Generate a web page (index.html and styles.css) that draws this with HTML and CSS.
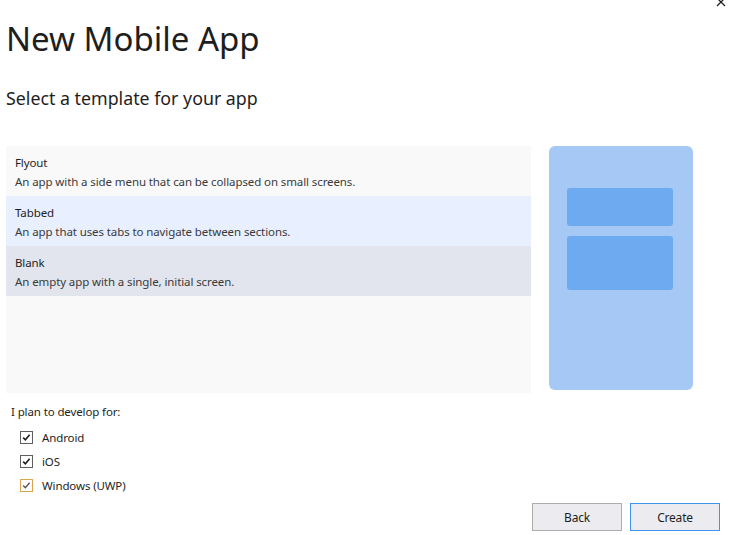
FILE: index.html
```html
<!DOCTYPE html>
<html>
<head>
<meta charset="utf-8">
<link rel="stylesheet" href="styles.css">
</head>
<body>
<div class="dialog">
  <svg class="close" viewBox="0 0 10 10" width="10" height="10"><path d="M1 -2 L9 6 M9 -2 L1 6" stroke="#1e1e1e" stroke-width="1.3" fill="none"/></svg>
  <h1 class="title">New Mobile App</h1>
  <h2 class="subtitle">Select a template for your app</h2>
  <div class="main">
    <div class="list">
      <div class="item">
        <div class="item-name">Flyout</div>
        <div class="item-desc">An app with a side menu that can be collapsed on small screens.</div>
      </div>
      <div class="item hover">
        <div class="item-name">Tabbed</div>
        <div class="item-desc">An app that uses tabs to navigate between sections.</div>
      </div>
      <div class="item selected">
        <div class="item-name">Blank</div>
        <div class="item-desc">An empty app with a single, initial screen.</div>
      </div>
    </div>
    <div class="preview">
      <div class="block small"></div>
      <div class="block large"></div>
    </div>
  </div>
  <div class="platforms">
    <div class="plat-label">I plan to develop for:</div>
    <label class="check"><span class="box"><svg viewBox="0 0 13 13" width="13" height="13"><path d="M3.2 6.6 L5.4 8.8 L9.6 3.8" fill="none" stroke="#1e1e1e" stroke-width="1.6"/></svg></span>Android</label>
    <label class="check"><span class="box"><svg viewBox="0 0 13 13" width="13" height="13"><path d="M3.2 6.6 L5.4 8.8 L9.6 3.8" fill="none" stroke="#1e1e1e" stroke-width="1.6"/></svg></span>iOS</label>
    <label class="check"><span class="box focus"><svg viewBox="0 0 13 13" width="13" height="13"><path d="M3.2 6.6 L5.4 8.8 L9.6 3.8" fill="none" stroke="#555" stroke-width="1.4"/></svg></span>Windows (UWP)</label>
  </div>
  <div class="buttons">
    <button class="btn">Back</button>
    <button class="btn primary">Create</button>
  </div>
</div>
</body>
</html>
```
FILE: styles.css
```css
html, body {
  margin: 0;
  padding: 0;
  background: #ffffff;
}
body {
  font-family: "Noto Sans", "Open Sans", sans-serif;
  color: #1e1e1e;
  width: 729px;
  height: 535px;
  overflow: hidden;
}
.dialog {
  position: relative;
  width: 729px;
  height: 535px;
}
.close {
  position: absolute;
  top: 0;
  left: 716px;
}
.title {
  margin: 0;
  padding: 17px 0 0 6px;
  font-weight: 400;
  font-size: 33px;
  line-height: 44px;
  letter-spacing: 0;
}
.subtitle {
  margin: 0;
  padding: 25px 0 0 6px;
  font-weight: 400;
  font-size: 17.8px;
  line-height: 24px;
}
.main {
  display: flex;
  margin-top: 36px;
  padding-left: 6px;
  height: 247px;
}
.list {
  width: 525px;
  background: #f9f9f9;
}
.item {
  height: 50px;
  padding: 7px 0 0 9px;
  box-sizing: border-box;
  font-size: 11.5px;
  line-height: 19px;
  letter-spacing: -0.1px;
}
.item.hover {
  background: #e8effe;
}
.item.selected {
  background: #e2e5ee;
}
.item-desc {
  color: #3a3a3a;
}
.preview {
  margin-left: 18px;
  width: 144px;
  height: 244px;
  background: #a6c8f5;
  border-radius: 6px;
  padding: 42px 0 0 18px;
  box-sizing: border-box;
  display: flex;
  flex-direction: column;
  gap: 10px;
}
.block {
  width: 106px;
  background: #6eaaef;
  border-radius: 3px;
}
.block.small { height: 38px; }
.block.large { height: 54px; }
.platforms {
  padding: 10px 0 0 11px;
  font-size: 11.5px;
  letter-spacing: -0.12px;
}
.plat-label {
  line-height: 18px;
  margin-bottom: 4px;
}
.check {
  display: flex;
  align-items: center;
  height: 24px;
  padding-left: 9px;
}
.box {
  width: 13px;
  height: 13px;
  border: 1px solid #5f5f5f;
  box-sizing: border-box;
  margin-right: 9px;
  display: flex;
  align-items: center;
  justify-content: center;
  background: #fff;
}
.box svg {
  flex: none;
}
.box.focus {
  border-color: #d9a750;
}
.buttons {
  position: absolute;
  left: 532px;
  top: 503px;
  display: flex;
  gap: 8px;
}
.btn {
  width: 90px;
  height: 28px;
  font-family: "Noto Sans", "Open Sans", sans-serif;
  font-size: 12px;
  letter-spacing: -0.2px;
  color: #1e1e1e;
  background: #ececf0;
  border: 1px solid #adadad;
  padding: 0;
  margin: 0;
}
.btn.primary {
  border-color: #3d95ef;
}
```
